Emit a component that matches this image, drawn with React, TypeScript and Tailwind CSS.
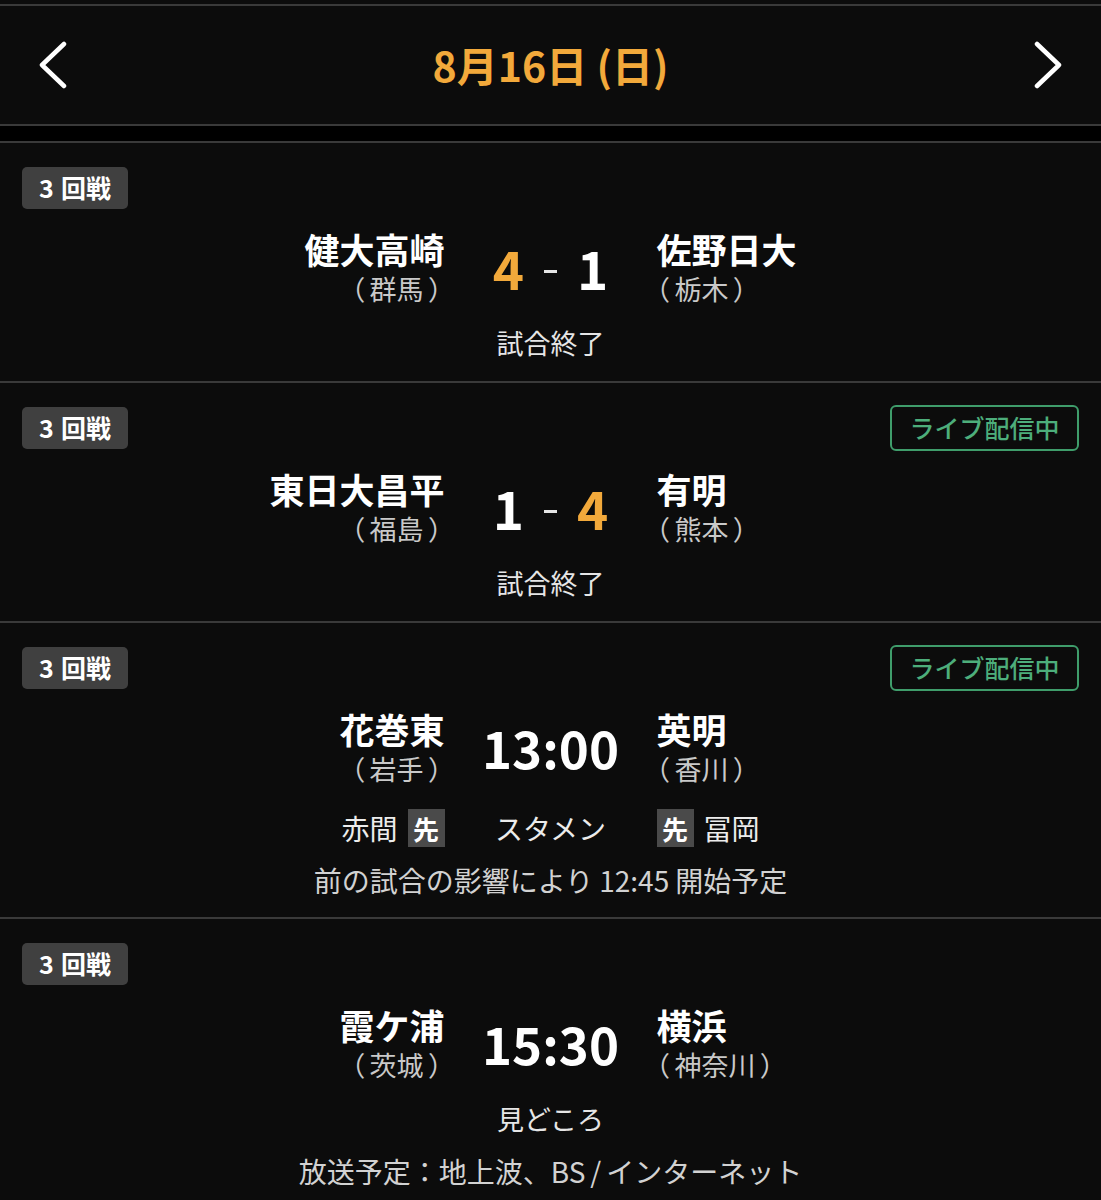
import React from "react";

type Team = { name: string; pref: string };

const Chevron = ({ dir }: { dir: "l" | "r" }) => (
  <svg width="30" height="48" viewBox="0 0 30 48" fill="none">
    {dir === "l" ? (
      <polyline points="26,3 4,24 26,45" stroke="#ffffff" strokeWidth="4.5" strokeLinecap="round" strokeLinejoin="round" />
    ) : (
      <polyline points="4,3 26,24 4,45" stroke="#ffffff" strokeWidth="4.5" strokeLinecap="round" strokeLinejoin="round" />
    )}
  </svg>
);

const Sep = () => <div className="h-[2px] bg-[#3a3a3a]" />;

const RoundBadge = () => (
  <div className="h-[42px] w-[106px] rounded-[5px] bg-[#404040] flex items-center justify-center text-[25px] font-bold text-white">
    <span>3</span>
    <span className="ml-[7px]">回戦</span>
  </div>
);

const LiveBadge = () => (
  <div className="h-[46px] w-[189px] rounded-[6px] border-2 border-[#3f9d6b] flex items-center justify-center text-[25px] text-[#4dae7b] font-medium">
    ライブ配信中
  </div>
);

const TeamBlock = ({ team, align }: { team: Team; align: "l" | "r" }) => (
  <div className={align === "r" ? "flex flex-col items-end text-right" : "flex flex-col items-start text-left"}>
    <div className="text-[35px] leading-[40px] font-bold text-white">{team.name}</div>
    <div
      className={
        "mt-[4px] text-[27px] leading-[32px] text-[#c9c9c9] [font-feature-settings:'palt'] " +
        (align === "r" ? "mr-[2px]" : "-ml-[1px]")
      }
    >
      {"（\u2009" + team.pref + "\u2009）"}
    </div>
  </div>
);

const Score = ({ a, b, win }: { a: number; b: number; win: "a" | "b" }) => (
  <div className="flex items-center justify-center gap-[20px] text-[53px] leading-none font-bold">
    <span className={win === "a" ? "text-[#f2a93b]" : "text-white"}>{a}</span>
    <span className="block w-[13px] h-[3px] bg-[#e6e6e6] translate-y-[4px]" />
    <span className={win === "b" ? "text-[#f2a93b]" : "text-white"}>{b}</span>
  </div>
);

const Time = ({ t }: { t: string }) => (
  <div className="text-center text-[51px] leading-none font-bold text-white">{t}</div>
);

const Card = ({
  live,
  left,
  right,
  center,
  children,
}: {
  live?: boolean;
  left: Team;
  right: Team;
  center: React.ReactNode;
  children: React.ReactNode;
}) => (
  <div className="bg-[#0c0c0c] px-[22px] pt-[24px]">
    <div className="h-[42px] flex items-center justify-between">
      <RoundBadge />
      {live && <LiveBadge />}
    </div>
    <div className="mt-[20px] grid grid-cols-[1fr_212px_1fr] items-center -mx-[22px]">
      <TeamBlock team={left} align="r" />
      <div className="flex justify-center">{center}</div>
      <TeamBlock team={right} align="l" />
    </div>
    {children}
  </div>
);

const Line = ({ text, cls }: { text: React.ReactNode; cls: string }) => (
  <div className={"text-center leading-[36px] " + cls}>{text}</div>
);

const Sen = () => (
  <span className="inline-flex h-[38px] w-[37px] items-center justify-center bg-[#4a4a4a] text-[26px] font-bold text-white">先</span>
);

export default function App() {
  return (
    <div className="min-h-[1200px] bg-black font-['Noto_Sans_CJK_JP','Noto_Sans',sans-serif]">
      <div className="h-[4px] bg-[#0c0c0c]" />
      <Sep />
      <div className="h-[118px] bg-[#0c0c0c] flex items-center justify-between px-[38px]">
        <Chevron dir="l" />
        <div className="text-[41px] font-bold text-[#f2a93b]">8月16日 (日)</div>
        <Chevron dir="r" />
      </div>
      <Sep />
      <div className="h-[15px] bg-black" />
      <Sep />

      <Card left={{ name: "健大高崎", pref: "群馬" }} right={{ name: "佐野日大", pref: "栃木" }} center={<Score a={4} b={1} win="a" />}>
        <div className="mt-[20px] pb-[20px]">
          <Line text="試合終了" cls="text-[27px] text-[#e6e6e6]" />
        </div>
      </Card>
      <Sep />

      <Card live left={{ name: "東日大昌平", pref: "福島" }} right={{ name: "有明", pref: "熊本" }} center={<Score a={1} b={4} win="b" />}>
        <div className="mt-[20px] pb-[20px]">
          <Line text="試合終了" cls="text-[27px] text-[#e6e6e6]" />
        </div>
      </Card>
      <Sep />

      <Card live left={{ name: "花巻東", pref: "岩手" }} right={{ name: "英明", pref: "香川" }} center={<Time t="13:00" />}>
        <div className="mt-[22px] grid grid-cols-[1fr_212px_1fr] items-center -mx-[22px] h-[38px] text-[28px] text-[#ececec]">
          <div className="flex items-center justify-end gap-[10px]">
            <span>赤間</span>
            <Sen />
          </div>
          <div className="text-center">スタメン</div>
          <div className="flex items-center justify-start gap-[10px]">
            <Sen />
            <span>冨岡</span>
          </div>
        </div>
        <div className="mt-[17px] pb-[19px]">
          <Line
            text={
              <>
                前の試合の影響により<span className="mx-[6px]">12:45</span>開始予定
              </>
            }
            cls="text-[#d2d2d2] text-[28px]"
          />
        </div>
      </Card>
      <Sep />

      <Card left={{ name: "霞ケ浦", pref: "茨城" }} right={{ name: "横浜", pref: "神奈川" }} center={<Time t="15:30" />}>
        <div className="mt-[20px]">
          <Line text="見どころ" cls="text-[27px] text-[#e6e6e6]" />
        </div>
        <div className="mt-[16px] pb-[30px]">
          <Line
            text={
              <>
                放送予定：地上波、BS<span className="mx-[5px]">/</span>インターネット
              </>
            }
            cls="text-[28px] text-[#d2d2d2]"
          />
        </div>
      </Card>
    </div>
  );
}
